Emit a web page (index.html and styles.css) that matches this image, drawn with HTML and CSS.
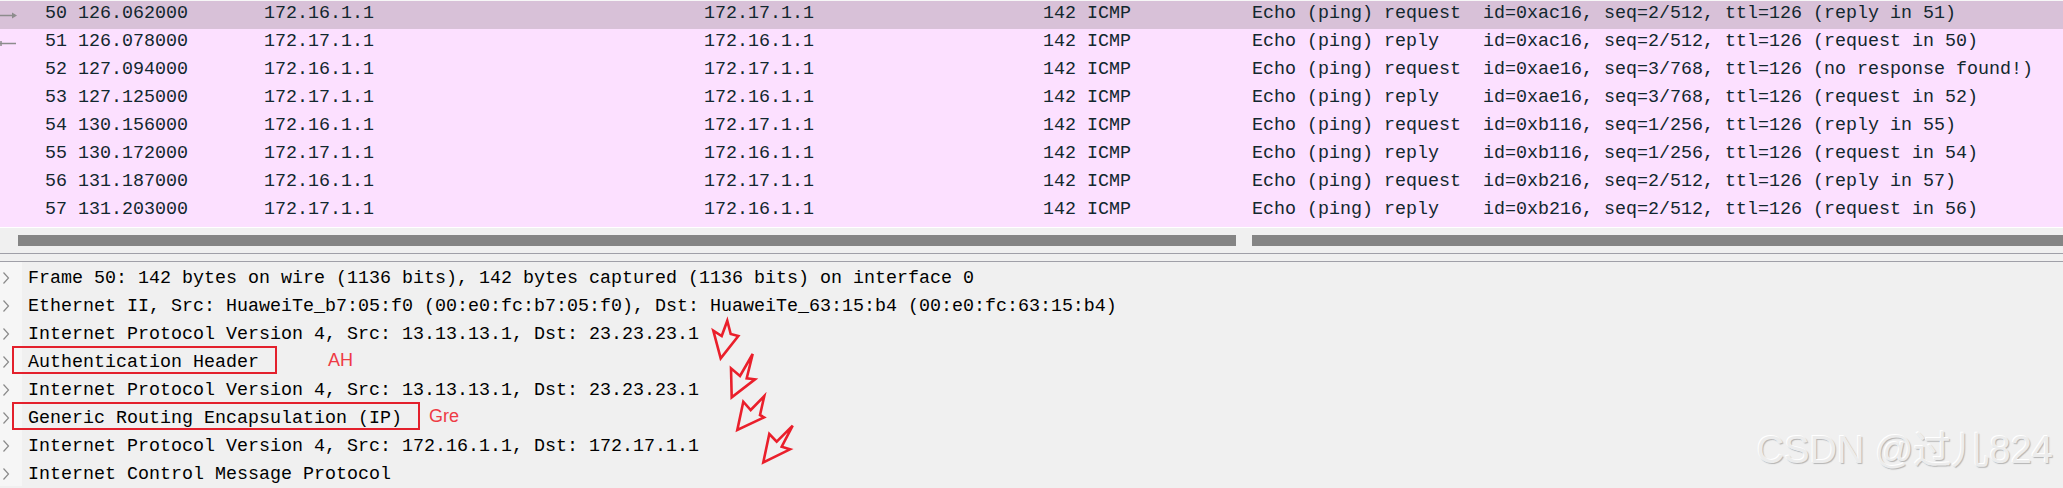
FILE: index.html
```html
<!DOCTYPE html>
<html lang="zh-CN">
<head>
    <meta charset="UTF-8">
    <title>Wireshark - AH over GRE</title>
    <link rel="stylesheet" href="styles.css">
</head>
<body>
    <div class="capture">
        <div class="packet-list">
            <div class="list-head"></div>

            <div class="pkt selected">
                <span class="c-mark"><svg width="22" height="28"><line x1="0" y1="14.5" x2="15" y2="14.5" stroke="#8c8c8c" stroke-width="1.5"/><path d="M12 11.5 L17 14.5 L12 17.5 Z" fill="#8c8c8c"/></svg></span>
                <span class="c-no">50</span><span class="c-time">126.062000</span><span class="c-src">172.16.1.1</span><span class="c-dst">172.17.1.1</span><span class="c-len">142</span><span class="c-proto">ICMP</span><span class="c-info">Echo (ping) request  id=0xac16, seq=2/512, ttl=126 (reply in 51)</span>
            </div>
            <div class="pkt">
                <span class="c-mark"><svg width="22" height="28"><line x1="0" y1="14.5" x2="16" y2="14.5" stroke="#8c8c8c" stroke-width="1.5"/><line x1="1" y1="12" x2="1" y2="17" stroke="#8c8c8c" stroke-width="1.5"/></svg></span>
                <span class="c-no">51</span><span class="c-time">126.078000</span><span class="c-src">172.17.1.1</span><span class="c-dst">172.16.1.1</span><span class="c-len">142</span><span class="c-proto">ICMP</span><span class="c-info">Echo (ping) reply    id=0xac16, seq=2/512, ttl=126 (request in 50)</span>
            </div>
            <div class="pkt">
                <span class="c-mark"></span>
                <span class="c-no">52</span><span class="c-time">127.094000</span><span class="c-src">172.16.1.1</span><span class="c-dst">172.17.1.1</span><span class="c-len">142</span><span class="c-proto">ICMP</span><span class="c-info">Echo (ping) request  id=0xae16, seq=3/768, ttl=126 (no response found!)</span>
            </div>
            <div class="pkt">
                <span class="c-mark"></span>
                <span class="c-no">53</span><span class="c-time">127.125000</span><span class="c-src">172.17.1.1</span><span class="c-dst">172.16.1.1</span><span class="c-len">142</span><span class="c-proto">ICMP</span><span class="c-info">Echo (ping) reply    id=0xae16, seq=3/768, ttl=126 (request in 52)</span>
            </div>
            <div class="pkt">
                <span class="c-mark"></span>
                <span class="c-no">54</span><span class="c-time">130.156000</span><span class="c-src">172.16.1.1</span><span class="c-dst">172.17.1.1</span><span class="c-len">142</span><span class="c-proto">ICMP</span><span class="c-info">Echo (ping) request  id=0xb116, seq=1/256, ttl=126 (reply in 55)</span>
            </div>
            <div class="pkt">
                <span class="c-mark"></span>
                <span class="c-no">55</span><span class="c-time">130.172000</span><span class="c-src">172.17.1.1</span><span class="c-dst">172.16.1.1</span><span class="c-len">142</span><span class="c-proto">ICMP</span><span class="c-info">Echo (ping) reply    id=0xb116, seq=1/256, ttl=126 (request in 54)</span>
            </div>
            <div class="pkt">
                <span class="c-mark"></span>
                <span class="c-no">56</span><span class="c-time">131.187000</span><span class="c-src">172.16.1.1</span><span class="c-dst">172.17.1.1</span><span class="c-len">142</span><span class="c-proto">ICMP</span><span class="c-info">Echo (ping) request  id=0xb216, seq=2/512, ttl=126 (reply in 57)</span>
            </div>
            <div class="pkt">
                <span class="c-mark"></span>
                <span class="c-no">57</span><span class="c-time">131.203000</span><span class="c-src">172.17.1.1</span><span class="c-dst">172.16.1.1</span><span class="c-len">142</span><span class="c-proto">ICMP</span><span class="c-info">Echo (ping) reply    id=0xb216, seq=2/512, ttl=126 (request in 56)</span>
            </div>
        </div>

        <div class="hscroll">
            <div class="thumb thumb-left"></div>
            <div class="thumb thumb-right"></div>
        </div>
        <div class="splitter"></div>

        <div class="tree">
            <div class="node"><span class="chev"><svg width="8" height="12"><polyline points="1.5,0.5 6.5,6 1.5,11.5" fill="none" stroke="#8a8a8a" stroke-width="1.2"/></svg></span><span class="label">Frame 50: 142 bytes on wire (1136 bits), 142 bytes captured (1136 bits) on interface 0</span></div>
            <div class="node"><span class="chev"><svg width="8" height="12"><polyline points="1.5,0.5 6.5,6 1.5,11.5" fill="none" stroke="#8a8a8a" stroke-width="1.2"/></svg></span><span class="label">Ethernet II, Src: HuaweiTe_b7:05:f0 (00:e0:fc:b7:05:f0), Dst: HuaweiTe_63:15:b4 (00:e0:fc:63:15:b4)</span></div>
            <div class="node"><span class="chev"><svg width="8" height="12"><polyline points="1.5,0.5 6.5,6 1.5,11.5" fill="none" stroke="#8a8a8a" stroke-width="1.2"/></svg></span><span class="label">Internet Protocol Version 4, Src: 13.13.13.1, Dst: 23.23.23.1</span></div>
            <div class="node"><span class="chev"><svg width="8" height="12"><polyline points="1.5,0.5 6.5,6 1.5,11.5" fill="none" stroke="#8a8a8a" stroke-width="1.2"/></svg></span><span class="label boxed">Authentication Header</span><span class="note note-ah">AH</span></div>
            <div class="node"><span class="chev"><svg width="8" height="12"><polyline points="1.5,0.5 6.5,6 1.5,11.5" fill="none" stroke="#8a8a8a" stroke-width="1.2"/></svg></span><span class="label">Internet Protocol Version 4, Src: 13.13.13.1, Dst: 23.23.23.1</span></div>
            <div class="node"><span class="chev"><svg width="8" height="12"><polyline points="1.5,0.5 6.5,6 1.5,11.5" fill="none" stroke="#8a8a8a" stroke-width="1.2"/></svg></span><span class="label boxed">Generic Routing Encapsulation (IP)</span><span class="note note-gre">Gre</span></div>
            <div class="node"><span class="chev"><svg width="8" height="12"><polyline points="1.5,0.5 6.5,6 1.5,11.5" fill="none" stroke="#8a8a8a" stroke-width="1.2"/></svg></span><span class="label">Internet Protocol Version 4, Src: 172.16.1.1, Dst: 172.17.1.1</span></div>
            <div class="node"><span class="chev"><svg width="8" height="12"><polyline points="1.5,0.5 6.5,6 1.5,11.5" fill="none" stroke="#8a8a8a" stroke-width="1.2"/></svg></span><span class="label">Internet Control Message Protocol</span></div>
        </div>

        <!-- hand drawn arrows laid over the tree -->
        <svg class="arrows" width="2063" height="488">
            <polygon points="727.3,320.7 730.7,334 738.3,336 720.7,358.3 713.3,330.7 721.7,336"/>
            <polygon points="752.7,354 746.7,378.3 755,379.3 731.7,397.3 731,368.3 740,376"/>
            <polygon points="764.3,396 760,415 764,417.3 737.3,430 743.3,401.7 750.7,410"/>
            <polygon points="792.7,425.7 781.7,446.7 790,449.3 763.3,462.3 769.3,434 776.7,441.7"/>
        </svg>

        <div class="watermark">CSDN @过儿824</div>
    </div>
</body>
</html>
```

FILE: styles.css
```css
body {
    margin: 0;
    background-color: #f0f0f0;
    font-family: "Liberation Mono", "DejaVu Sans Mono", monospace;
}
.capture {
    position: relative;
    width: 2063px;
    height: 488px;
    overflow: hidden;
    background-color: #f0f0f0;
}

/* packet list */
.packet-list {
    background-color: #fce0ff;
    padding-bottom: 2px;
    border-bottom: 1px solid #ffffff;
}
.list-head {
    height: 1px;
    background-color: #f7f7f7;
}
.pkt {
    display: grid;
    grid-template-columns: 22px 45px 191px 440px 240px 143px 165px 1fr;
    height: 28px;
    line-height: 26px;
    font-size: 18.33px;
    color: #12272e;
    white-space: pre;
}
.pkt.selected {
    background-color: #d8c1d8;
}
.c-mark svg {
    display: block;
}
.c-no {
    text-align: right;
}
.c-time {
    padding-left: 11px;
}
.c-src, .c-dst, .c-proto, .c-info {
    padding-left: 6px;
}
.c-len {
    text-align: right;
    padding-right: 5px;
}

/* scroll bar + splitter */
.hscroll {
    display: flex;
    gap: 16px;
    height: 25px;
    padding-top: 7px;
    box-sizing: border-box;
}
.thumb {
    height: 11px;
    background-color: #858585;
}
.thumb-left {
    margin-left: 18px;
    width: 1218px;
}
.thumb-right {
    flex: 1;
}
.splitter {
    height: 7px;
    border-top: 1px solid #a0a0a8;
    border-bottom: 1px solid #a0a0a8;
}

/* details tree */
.tree {
    display: flex;
    flex-direction: column;
}
.node {
    display: flex;
    height: 28px;
    font-size: 18.33px;
    color: #000;
    white-space: pre;
}
.chev {
    width: 22px;
    flex: none;
    background-color: #f6f6f6;
    padding: 10px 0 0 2px;
    box-sizing: border-box;
}
.chev svg {
    display: block;
}
.label {
    box-sizing: border-box;
    height: 28px;
    margin-left: -10px;
    padding: 3px 16px 0 14px;
    line-height: 24px;
    border: 2px solid transparent;
}
.label.boxed {
    border-color: #e3202c;
}
.note {
    font-family: "Liberation Sans", "Noto Sans CJK SC", sans-serif;
    font-size: 18px;
    line-height: 28px;
    color: #ee3b45;
}
.note-ah {
    margin-left: 51px;
}
.note-gre {
    margin-left: 9px;
}

.arrows {
    position: absolute;
    left: 0;
    top: 0;
    pointer-events: none;
}
.arrows polygon {
    fill: none;
    stroke: #ea1f2b;
    stroke-width: 2.6;
    stroke-linejoin: miter;
}

.watermark {
    position: absolute;
    right: 10px;
    bottom: 14px;
    font-family: "Liberation Sans", "Noto Sans CJK SC", sans-serif;
    font-size: 38px;
    color: #ececec;
    text-shadow: -1px -1px 0 #ffffff, 1px 1px 1px #b4b4b4;
    white-space: nowrap;
}
```
